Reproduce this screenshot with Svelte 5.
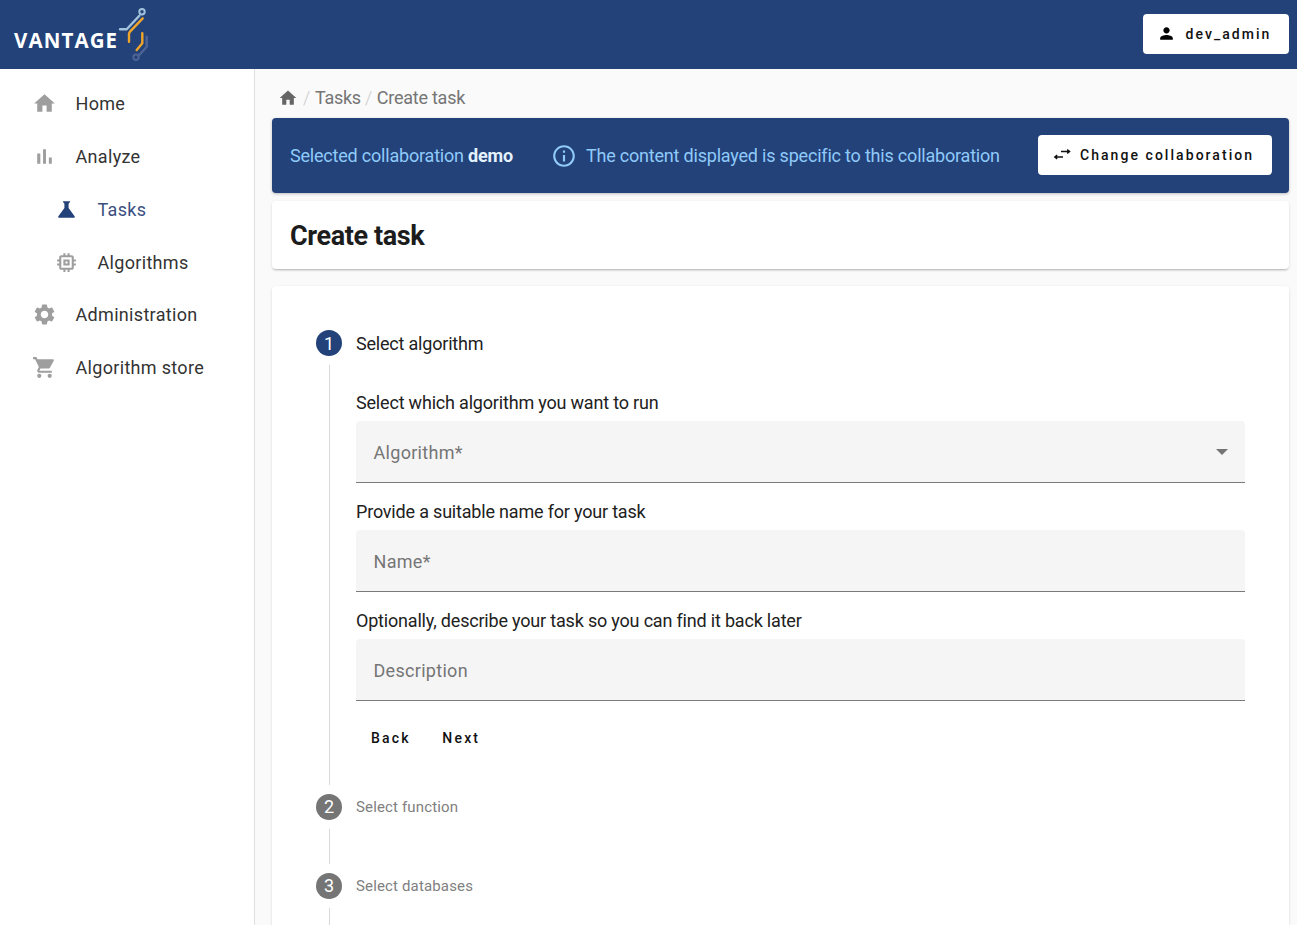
<script>
  const paths = {
    home: 'M10 20v-6h4v6h5v-8h3L12 3 2 12h3v8z',
    bar: 'M5 9.2h3V19H5zM10.6 5h2.8v14h-2.8zm5.6 8H19v6h-2.8z',
    science: 'M19.8 18.4 14 10.67V6.5l1.35-1.69c.26-.33.03-.81-.39-.81H9.04c-.42 0-.65.48-.39.81L10 6.5v4.17L4.2 18.4c-.49.66-.02 1.6.8 1.6h14c.82 0 1.29-.94.8-1.6z',
    memory: 'M15 9H9v6h6V9zm-2 4h-2v-2h2v2zm8-2V9h-2V7c0-1.1-.9-2-2-2h-2V3h-2v2h-2V3H9v2H7c-1.1 0-2 .9-2 2v2H3v2h2v2H3v2h2v2c0 1.1.9 2 2 2h2v2h2v-2h2v2h2v-2h2c1.1 0 2-.9 2-2v-2h2v-2h-2v-2h2zm-4 6H7V7h10v10z',
    settings: 'M19.14 12.94c.04-.3.06-.61.06-.94 0-.32-.02-.64-.07-.94l2.03-1.58c.18-.14.23-.41.12-.61l-1.92-3.32c-.12-.22-.37-.29-.59-.22l-2.39.96c-.5-.38-1.03-.7-1.62-.94l-.36-2.54c-.04-.24-.24-.41-.48-.41h-3.84c-.24 0-.43.17-.47.41l-.36 2.54c-.59.24-1.13.57-1.62.94l-2.39-.96c-.22-.08-.47 0-.59.22L2.74 8.87c-.12.21-.08.47.12.61l2.03 1.58c-.05.3-.09.63-.09.94s.02.64.07.94l-2.03 1.58c-.18.14-.23.41-.12.61l1.92 3.32c.12.22.37.29.59.22l2.39-.96c.5.38 1.03.7 1.62.94l.36 2.54c.05.24.24.41.48.41h3.84c.24 0 .44-.17.47-.41l.36-2.54c.59-.24 1.13-.56 1.62-.94l2.39.96c.22.08.47 0 .59-.22l1.92-3.32c.12-.22.07-.47-.12-.61l-2.01-1.58zM12 15.6c-1.98 0-3.6-1.62-3.6-3.6s1.62-3.6 3.6-3.6 3.6 1.62 3.6 3.6-1.62 3.6-3.6 3.6z',
    cart: 'M7 18c-1.1 0-1.99.9-1.99 2S5.9 22 7 22s2-.9 2-2-.9-2-2-2zM1 2v2h2l3.6 7.59-1.35 2.45c-.16.28-.25.61-.25.96 0 1.1.9 2 2 2h12v-2H7.42c-.14 0-.25-.11-.25-.25l.03-.12.9-1.63h7.45c.75 0 1.41-.41 1.75-1.03l3.58-6.49c.08-.14.12-.31.12-.48 0-.55-.45-1-1-1H5.21l-.94-2H1zm16 16c-1.1 0-1.99.9-1.99 2s.89 2 1.99 2 2-.9 2-2-.9-2-2-2z',
    person: 'M12 12c2.21 0 4-1.79 4-4s-1.79-4-4-4-4 1.79-4 4 1.79 4 4 4zm0 2c-2.67 0-8 1.34-8 4v2h16v-2c0-2.66-5.33-4-8-4z',
    info: 'M11 7h2v2h-2zm0 4h2v6h-2zm1-9C6.48 2 2 6.48 2 12s4.48 10 10 10 10-4.48 10-10S17.52 2 12 2zm0 18c-4.41 0-8-3.59-8-8s3.59-8 8-8 8 3.59 8 8-3.59 8-8 8z'
  };
  const nav = [
    { icon: 'home', label: 'Home' },
    { icon: 'bar', label: 'Analyze' },
    { icon: 'science', label: 'Tasks', sub: true, active: true },
    { icon: 'memory', label: 'Algorithms', sub: true },
    { icon: 'settings', label: 'Administration' },
    { icon: 'cart', label: 'Algorithm store' }
  ];
  const fields = [
    { label: 'Select which algorithm you want to run', ph: 'Algorithm*', select: true },
    { label: 'Provide a suitable name for your task', ph: 'Name*' },
    { label: 'Optionally, describe your task so you can find it back later', ph: 'Description' }
  ];
</script>

<div class="page">
  <header class="top">
    <div class="logo">
      <span class="wordmark">VANTAGE</span>
      <svg class="mark" width="36" height="60" viewBox="0 0 36 60" fill="none" stroke-linecap="round" stroke-linejoin="round">
        <circle cx="24" cy="9.7" r="2.7" stroke="#a3c2dc" stroke-width="2"/>
        <path d="M21.3 13.7 L8.7 27.3 H2" stroke="#a3c2dc" stroke-width="2.4"/>
        <path d="M24.7 16.3 L12 29.7 L11 31.5 V39.7" stroke="#f0a52a" stroke-width="2.4"/>
        <path d="M24.3 31.3 V41.3 L18.7 48" stroke="#f0a52a" stroke-width="2.4"/>
        <path d="M28.7 34.7 V44.7 L21.3 53" stroke="#4f6496" stroke-width="2.4"/>
        <circle cx="18" cy="55.3" r="2.7" stroke="#4f6496" stroke-width="2"/>
      </svg>
    </div>
    <button class="btn user">
      <svg viewBox="0 0 24 24" width="19" height="19"><path d={paths.person}/></svg>
      <span>dev_admin</span>
    </button>
  </header>

  <div class="body">
    <nav class="side">
      {#each nav as n}
        <div class="item" class:sub={n.sub} class:active={n.active}>
          <svg viewBox="0 0 24 24" width="25" height="25"><path d={paths[n.icon]}/></svg>
          <span>{n.label}</span>
        </div>
      {/each}
    </nav>

    <main class="main">
      <div class="crumbs">
        <svg viewBox="0 0 24 24" width="20" height="20"><path d={paths.home}/></svg>
        <span class="sep">/</span>
        <span>Tasks</span>
        <span class="sep">/</span>
        <span>Create task</span>
      </div>

      <section class="banner">
        <span class="sel">Selected collaboration <b>demo</b></span>
        <svg class="info" viewBox="0 0 24 24" width="26" height="26"><path d={paths.info}/></svg>
        <span class="msg">The content displayed is specific to this collaboration</span>
        <button class="btn change">
          <svg viewBox="0 0 18 18" width="18" height="18" fill="none" stroke="#111" stroke-width="1.4">
            <path d="M8 5.5H16M14.2 3.6 16.6 5.5 14.2 7.4" />
            <path d="M10 11H2.4M4.2 9.1 1.8 11 4.2 12.9" />
          </svg>
          <span>Change collaboration</span>
        </button>
      </section>

      <section class="card title"><h1>Create task</h1></section>

      <section class="card form">
        <div class="head">
          <span class="num on">1</span>
          <span class="step-title">Select algorithm</span>
        </div>
        <div class="rail open">
          {#each fields as f}
            <div class="fieldlabel">{f.label}</div>
            <div class="field">
              <span>{f.ph}</span>
              {#if f.select}<i class="caret"></i>{/if}
            </div>
          {/each}
          <div class="actions">
            <button class="text">Back</button>
            <button class="text">Next</button>
          </div>
        </div>

        <div class="head">
          <span class="num">2</span>
          <span class="step-title off">Select function</span>
        </div>
        <div class="rail"></div>

        <div class="head">
          <span class="num">3</span>
          <span class="step-title off">Select databases</span>
        </div>
        <div class="rail"></div>
      </section>
    </main>
  </div>
</div>

<style>
  :global(body) { margin: 0; background: #fff; }
  .page {
    width: 1297px;
    height: 925px;
    overflow: hidden;
    display: flex;
    flex-direction: column;
    font-family: Roboto, "Liberation Sans", sans-serif;
    color: #212121;
  }
  .top {
    height: 69px;
    flex: none;
    background: #224279;
    display: flex;
    align-items: center;
    justify-content: space-between;
    padding: 0 8px 0 14px;
  }
  .logo { display: flex; align-items: center; height: 69px; }
  .wordmark {
    font-family: "Open Sans", sans-serif;
    font-weight: 700;
    font-size: 20.5px;
    letter-spacing: 1.1px;
    color: #fff;
    margin-top: 11px;
  }
  .mark { align-self: flex-start; margin-top: 2px; margin-left: 0; }
  .btn {
    height: 40px;
    background: #fff;
    border: 0;
    border-radius: 4px;
    display: flex;
    align-items: center;
    font-family: inherit;
    font-weight: 500;
    font-size: 14px;
    letter-spacing: 2.05px;
    color: #111;
    padding: 0;
  }
  .user { width: 146px; padding-left: 14px; gap: 9.5px; margin-bottom: 2px; }
  .body { flex: 1; display: flex; min-height: 0; }
  .side {
    width: 254px;
    flex: none;
    border-right: 1px solid #e0e0e0;
    background: #fff;
    padding-top: 8.4px;
    box-sizing: content-box;
  }
  .item {
    height: 52.8px;
    display: flex;
    align-items: center;
    padding-left: 32px;
    gap: 18.5px;
    font-size: 18px;
    letter-spacing: .32px;
    color: #333;
  }
  .item svg { fill: #9e9e9e; flex: none; }
  .item.sub { padding-left: 54px; }
  .item.active { color: #3a4f80; }
  .item.active svg { fill: #224279; }
  .main {
    flex: 1;
    min-width: 0;
    background: #fafafa;
    padding: 0 8px 0 17px;
  }
  .crumbs {
    height: 49px;
    display: flex;
    align-items: center;
    gap: 4px;
    padding-left: 6px;
    font-size: 18px;
    letter-spacing: -.25px;
    color: #757575;
    box-sizing: border-box;
    padding-top: 8px;
  }
  .crumbs svg { fill: #666; margin-right: 1px; }
  .sep { color: #ccc; font-weight: 300; margin-right: 1px; }
  .banner {
    height: 75px;
    background: #224279;
    border-radius: 4px;
    display: flex;
    align-items: center;
    padding: 0 17px 0 18px;
    color: #90caf9;
    font-size: 18px;
    letter-spacing: -.2px;
    box-shadow: 0 1px 3px rgba(0,0,0,.25);
  }
  .sel b { color: #e3f2fd; font-weight: 700; }
  .info { fill: #90caf9; margin-left: 38px; margin-right: 9px; flex: none; }
  .change { margin-left: auto; width: 234px; padding-left: 15px; gap: 9px; margin-bottom: 1px; }
  .card {
    background: #fff;
    border-radius: 4px;
    box-shadow: 0 2px 2px -1px rgba(0,0,0,.2), 0 1px 3px rgba(0,0,0,.12);
  }
  .title {
    height: 68px;
    box-sizing: border-box;
    margin-top: 8px;
    display: flex;
    align-items: center;
    padding: 1px 0 0 18px;
  }
  h1 { margin: 0; font-size: 27px; font-weight: 700; letter-spacing: -.4px; color: #1c1c1c; }
  .form {
    margin-top: 17px;
    padding: 44px 44px 20px;
  }
  .head { height: 26px; display: flex; align-items: center; gap: 14px; }
  .num {
    width: 26px;
    height: 26px;
    border-radius: 50%;
    background: #757575;
    color: #fff;
    font-size: 18px;
    display: flex;
    align-items: center;
    justify-content: center;
    flex: none;
  }
  .num.on { background: #224279; }
  .step-title { font-size: 18px; letter-spacing: -.2px; color: #212121; }
  .step-title.off { font-size: 15px; color: #808080; letter-spacing: .15px; }
  .rail {
    margin: 9px 0 9px 13px;
    border-left: 1px solid #d9d9d9;
    height: 35px;
    box-sizing: content-box;
  }
  .rail.open {
    height: auto;
    padding: 25.5px 0 29px 26px;
  }
  .fieldlabel { height: 23px; line-height: 23px; padding-bottom: 7.5px; font-size: 18px; letter-spacing: -.19px; color: #212121; }
  .field {
    height: 60.5px;
    box-sizing: content-box;
    margin-bottom: 17px;
    background: #f5f5f5;
    border-bottom: 1px solid #7a7a7a;
    border-radius: 4px 4px 0 0;
    display: flex;
    align-items: center;
    justify-content: space-between;
    padding: 0 17px 0 17.5px;
    font-size: 18px;
    letter-spacing: .3px;
    color: #757575;
  }
  .field span { padding-top: 2px; }
  .caret {
    width: 0; height: 0;
    border-left: 6px solid transparent;
    border-right: 6px solid transparent;
    border-top: 6px solid #757575;
    margin-top: 1px;
  }
  .actions { display: flex; height: 36px; margin-top: 19px; }
  .text {
    background: none;
    border: 0;
    padding: 0 15px;
    font-family: inherit;
    font-size: 14px;
    font-weight: 500;
    letter-spacing: 2.2px;
    color: #111;
  }
  .text + .text { margin-left: 1.5px; }
</style>
